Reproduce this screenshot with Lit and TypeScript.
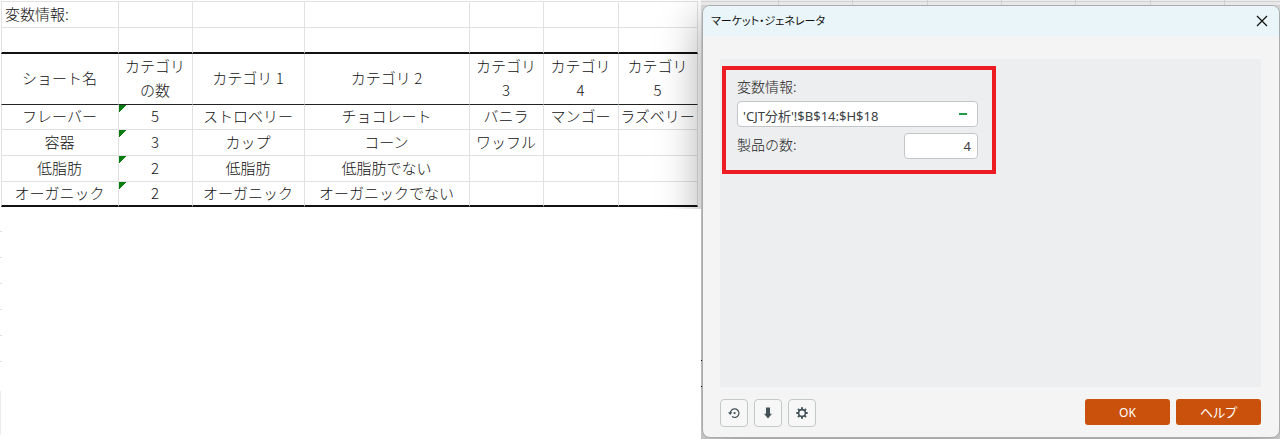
import { LitElement, html, css } from "lit";
import { customElement } from "lit/decorators.js";

const BODY_ROWS: string[][] = [
  ["フレーバー", "5", "ストロベリー", "チョコレート", "バニラ", "マンゴー", "ラズベリー"],
  ["容器", "3", "カップ", "コーン", "ワッフル", "", ""],
  ["低脂肪", "2", "低脂肪", "低脂肪でない", "", "", ""],
  ["オーガニック", "2", "オーガニック", "オーガニックでない", "", "", ""],
];
const HEADINGS = ["ショート名", "カテゴリの数", "カテゴリ 1", "カテゴリ 2", "カテゴリ 3", "カテゴリ 4", "カテゴリ 5"];

@customElement("variable-sheet")
export class VariableSheet extends LitElement {
  static styles = css`
    :host {
      display: flex;
      flex-direction: column;
      min-width: 0;
      font-family: "Noto Sans CJK JP", sans-serif;
      font-weight: 300;
      font-size: 15px;
      line-height: 25px;
      color: #111;
      background: #fff;
    }
    table {
      table-layout: fixed;
      border-collapse: separate;
      border-spacing: 0;
      margin: 1px 3px 0 1px;
    }
    .c1 { width: 118px; }
    .c2, .c5 { width: 74px; }
    .c3 { width: 112px; }
    .c4 { width: 165px; }
    .c6 { width: 75px; }
    .c7 { width: 79px; }
    th, td {
      box-sizing: border-box;
      height: 26px;
      padding: 0 1px 2px 0;
      line-height: 23px;
      font-weight: inherit;
      text-align: center;
      vertical-align: middle;
      white-space: nowrap;
      border-right: 1px solid #e1e1e1;
      border-bottom: 1px solid #e1e1e1;
    }
    tr > :first-child { border-left: 1px solid #e1e1e1; }
    .caption > * { height: 27px; border-top: 1px solid #e1e1e1; }
    .caption > :first-child { text-align: left; padding-left: 3px; }
    .spacer > * { border-bottom: 2px solid #111; }
    .head > * {
      height: 51px;
      padding: 0 6px 2px 5px;
      line-height: 24px;
      white-space: normal;
      border-bottom-color: #222;
    }
    tbody tr:first-child > * { height: 25px; line-height: 22px; }
    tbody tr:last-child > * { height: 25px; line-height: 21px; border-bottom: 2px solid #111; }
    .count {
      background: linear-gradient(135deg, #0a7d12 5px, transparent 5px) no-repeat;
    }
    .below {
      flex: 1;
      position: relative;
      z-index: 1;
      margin-top: 2px;
      background:
        linear-gradient(#ececec, #ececec) 0 182px / 1px 44px no-repeat,
        repeating-linear-gradient(to bottom, transparent 0 22px, #e1e1e1 22px 23px, transparent 23px 26px) 0 0 / 2px 177px no-repeat,
        #fff;
    }
  `;

  render() {
    return html`
      <table>
        <colgroup>${HEADINGS.map((_, i) => html`<col class="c${i + 1}" />`)}</colgroup>
        <thead>
          <tr class="caption"><td>変数情報:</td>${HEADINGS.slice(1).map(() => html`<td></td>`)}</tr>
          <tr class="spacer">${HEADINGS.map(() => html`<td></td>`)}</tr>
          <tr class="head">${HEADINGS.map((h) => html`<th scope="col">${h}</th>`)}</tr>
        </thead>
        <tbody>
          ${BODY_ROWS.map(
            (row) => html`<tr>${row.map((v, i) => html`<td class=${i === 1 ? "count" : "value"}>${v}</td>`)}</tr>`
          )}
        </tbody>
      </table>
      <div class="below"></div>
    `;
  }
}

@customElement("market-dialog")
export class MarketDialog extends LitElement {
  static styles = css`
    :host {
      display: flex;
      flex-direction: column;
      box-sizing: border-box;
      border: 1px solid #a9abac;
      border-radius: 8px;
      background: #f4f4f4;
      box-shadow: 0 12px 44px rgba(0, 0, 0, 0.36);
      font-family: "Noto Sans", "Noto Sans CJK JP", sans-serif;
      font-size: 14px;
      color: #3c4043;
    }
    header {
      display: flex;
      align-items: center;
      justify-content: space-between;
      height: 30px;
      padding: 0 11px 0 8px;
      border-radius: 7px 7px 0 0;
      background: #e9f5f8;
    }
    h1 {
      margin: 0;
      font-size: 11px;
      line-height: 20px;
      font-weight: 400;
      font-feature-settings: "palt";
      color: #111;
    }
    button { font: inherit; padding: 0; cursor: pointer; }
    .close {
      display: flex;
      border: 0;
      background: none;
      color: #111;
    }
    .panel {
      flex: 1;
      margin: 23px 18px 0 17px;
      padding: 7px 2px;
      background: #edeef0;
    }
    .fields {
      box-sizing: border-box;
      display: grid;
      grid-template-columns: 1fr 74px;
      row-gap: 6px;
      width: 274px;
      max-width: 100%;
      padding: 5px 14px 11px 11px;
      border: 4px solid #ed1c24;
    }
    label { line-height: 22px; font-family: "Noto Sans CJK JP", sans-serif; font-weight: 300; color: #222; }
    .range-label { grid-column: 1 / -1; margin-bottom: -2px; }
    .range {
      grid-column: 1 / -1;
      display: flex;
      align-items: center;
    }
    .range, .number {
      box-sizing: border-box;
      height: 26px;
      border: 1px solid #c3c6c9;
      border-radius: 4px;
      background: #fff;
    }
    input {
      min-width: 0;
      outline: 0;
      font: inherit;
      font-size: 13px;
      color: #3c4043;
    }
    .range input { flex: 1; padding: 2px 0 0 5px; border: 0; background: none; }
    .number { padding: 0 6px; text-align: right; }
    .collapse {
      display: flex;
      justify-content: center;
      width: 28px;
      border: 0;
      background: none;
    }
    footer {
      display: flex;
      align-items: flex-start;
      gap: 6px;
      padding: 12px 18px 10px 17px;
    }
    .tool {
      display: grid;
      place-items: center;
      width: 28px;
      height: 28px;
      border: 1px solid #c3c8ca;
      border-radius: 4px;
      background: #f7f7f7;
      color: #44525a;
    }
    .push { margin-right: auto; }
    .action {
      width: 85px;
      height: 26px;
      border: 0;
      border-radius: 3px;
      background: #c9510c;
      color: #fff;
      font-size: 12px;
    }
    .kana { font-size: 13px; line-height: 20px; font-feature-settings: "palt"; }
  `;

  render() {
    return html`
      <header>
        <h1>マーケット・ジェネレータ</h1>
        <button class="close" aria-label="閉じる">
          <svg width="12" height="13" viewBox="0 0 12 13" fill="none" stroke="currentColor" stroke-width="1.2">
            <path d="M1 1l10 10M11 1L1 11" />
          </svg>
        </button>
      </header>
      <div class="panel">
        <div class="fields">
          <label class="range-label" for="range">変数情報:</label>
          <div class="range">
            <input id="range" type="text" .value=${"'CJT分析'!$B$14:$H$18"} />
            <button class="collapse" aria-label="範囲を選択">
              <svg width="8" height="2" viewBox="0 0 8 2"><path d="M0 0h8v2H0z" fill="#1f9a48" /></svg>
            </button>
          </div>
          <label for="products">製品の数:</label>
          <input class="number" id="products" type="text" inputmode="numeric" .value=${"4"} />
        </div>
      </div>
      <footer>
        <button class="tool" aria-label="リセット">
          <svg width="12" height="12" viewBox="0 0 12 12" fill="none" stroke="currentColor" stroke-width="1.2">
            <path d="M2.300 6.400A4.300 4.300 0 1 1 4 9.600" />
            <path d="M0 5.200h4.400L2.200 8z" fill="currentColor" stroke="none" />
            <circle cx="6.600" cy="6.100" r="1.100" fill="currentColor" stroke="none" />
          </svg>
        </button>
        <button class="tool" aria-label="読み込み">
          <svg width="8" height="12" viewBox="0 0 8 12" fill="currentColor">
            <path d="M2 .5h4v6.200h2L4 11.500 0 6.700h2z" />
          </svg>
        </button>
        <button class="tool push" aria-label="設定">
          <svg width="12" height="12" viewBox="0 0 12 12" fill="none" stroke="currentColor">
            <circle cx="6" cy="6" r="3.400" stroke-width="1.600" />
            <path
              d="M6 .3v2M6 9.700v2M.3 6h2M9.700 6h2M2 2l1.400 1.400M8.600 8.600L10 10M10 2L8.600 3.400M3.400 8.600L2 10"
              stroke-width="2"
            />
          </svg>
        </button>
        <button class="action">OK</button>
        <button class="action kana">ヘルプ</button>
      </footer>
    `;
  }
}

@customElement("app-root")
export class AppRoot extends LitElement {
  static styles = css`
    :host {
      display: grid;
      grid-template-columns: 701fr 579fr;
      min-height: 100vh;
      overflow: hidden;
    }
    .desk {
      display: flex;
      flex-direction: column;
      box-sizing: border-box;
      padding-bottom: 1px;
      background:
        linear-gradient(#111, #111) 0 360px / 3px 1px no-repeat,
        linear-gradient(#111, #111) 0 386px / 3px 1px no-repeat,
        #e0e0e0;
    }
    .strip {
      display: flex;
      height: 5px;
      position: relative;
      z-index: 1;
      background: linear-gradient(#ececec 0 1px, #d2d2d2 1px 2px, #e8e8e8 2px);
    }
    .cell { flex: 1; border-right: 1px solid #cfcfcf; }
    .first { flex: 0 0 77px; }
    .last { flex: 0 0 55px; border: 0; }
    market-dialog { flex: 1; margin: 0 0 0 1px; }
  `;

  render() {
    return html`
      <variable-sheet></variable-sheet>
      <div class="desk">
        <div class="strip">
          <span class="cell first"></span>
          ${Array.from({ length: 6 }, () => html`<span class="cell"></span>`)}
          <span class="cell last"></span>
        </div>
        <market-dialog></market-dialog>
      </div>
    `;
  }
}
